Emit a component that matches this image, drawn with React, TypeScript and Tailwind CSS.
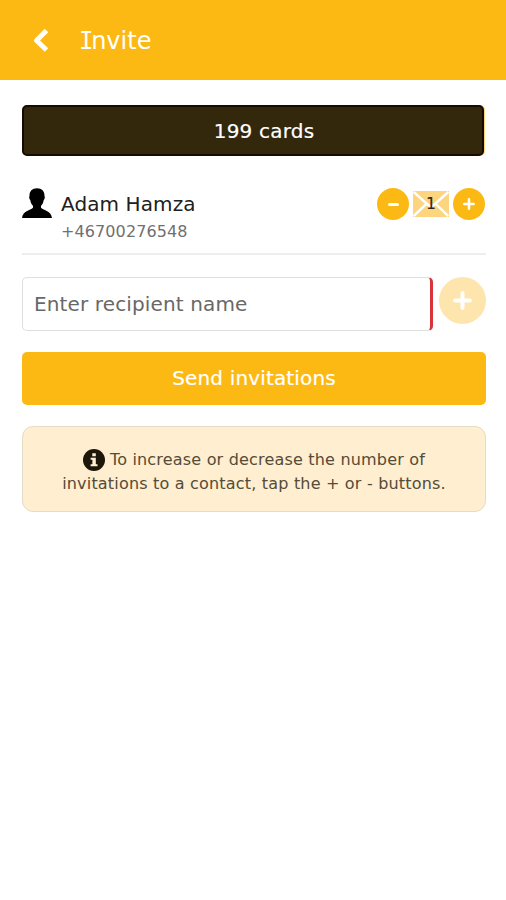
import React from "react";

function Plus({ className }: { className: string }) {
  return (
    <svg viewBox="0 0 20 20" className={className} fill="none" stroke="white" strokeWidth="4.2" strokeLinecap="round">
      <path d="M10 2.2v15.6M2.2 10h15.6" />
    </svg>
  );
}

function Envelope() {
  return (
    <div className="relative ml-1 h-[26px] w-9 bg-[#fdd57f]">
      <svg viewBox="0 0 36 27" className="h-full w-full" fill="none" stroke="white" strokeWidth="2.5">
        <path d="M0 1 15 14.5q3 2.2 6 0L36 1M0 26 13.5 13M36 26 22.5 13" />
      </svg>
      <span className="absolute inset-0 text-center text-[15px] leading-[27px] text-[#302610] [-webkit-text-stroke:0.2px_#302610]">1</span>
    </div>
  );
}

export default function App() {
  return (
    <div className="min-h-[900px] w-[506px] bg-white font-['DejaVu_Sans',sans-serif]">
      <header className="flex h-20 items-center bg-[#fdb913] pl-[32px] text-white">
        <svg viewBox="0 0 17 26" className="h-[26px] w-[17px]" fill="none" stroke="white" strokeWidth="5" strokeLinejoin="round">
          <path d="M14.500 3.500 4.500 13.500l10 9.500" />
        </svg>
        <h1 className="ml-[30px] pt-0.5 text-[24px] leading-8">
          <span className="-mr-px font-['DejaVu_Sans_Mono',monospace] tracking-[-1.3px]">I</span>nvite
        </h1>
      </header>

      <main className="pt-[25px] pr-5 pl-[22px]">
        <div className="mr-px h-[51px] rounded-[5px] border-r border-[#fbd477] bg-[#fbd477]">
          <div className="h-full rounded-[5px] border-2 border-[#160b02] bg-[#33270c] pl-[22px] text-center text-[20px] leading-[48px] tracking-[0.2px] text-white [-webkit-text-stroke:0.2px_white]">
            199 cards
          </div>
        </div>

        <section className="mt-[31px] flex h-[68px] border-b-2 border-[#eeeeee]">
          <svg viewBox="0 0 30 30" className="mt-px h-[30px] w-[30px]" fill="black">
            <path d="M15 0.300C10.200 0.300 7.300 3.200 7.500 8c-.7 1.100-.2 3.200.8 4 .4 2.800 1.300 4.400 2.700 5.800v2C9.500 22.200 0.800 22.600 0 30h30c-.8-7.400-9.500-7.800-11-10.200v-2c1.400-1.400 2.300-3 2.700-5.800 1-.8 1.500-2.900.8-4C22.700 3.200 19.800 0.300 15 0.300Z" />
          </svg>
          <div className="ml-[9px] flex-1">
            <div className="mt-[3px] text-[20px] leading-7 tracking-[0.1px] text-[#202020]">Adam Hamza</div>
            <div className="pt-px text-[16px] leading-[26px] tracking-[0.1px] text-[#707070]">+46700276548</div>
          </div>
          <div className="mt-px mr-px flex h-8 items-center">
            <button className="flex size-8 items-center justify-center rounded-full bg-[#fdb913]">
              <span className="h-[3px] w-[11px] rounded-full bg-white" />
            </button>
            <Envelope />
            <button className="ml-1 flex size-8 items-center justify-center rounded-full bg-[#fdb913]">
              <Plus className="size-3" />
            </button>
          </div>
        </section>

        <div className="mt-[22px] flex h-[54px] justify-between">
          <div className="h-[54px] w-[411px] rounded-[5px] border border-r-[3px] border-[#dedede] border-r-[#d9343b] pl-[11px] text-[20px] leading-[52px] tracking-[0.13px] text-[#686868]">
            Enter recipient name
          </div>
          <button className="flex size-[47px] items-center justify-center rounded-full bg-[#fee4ad]">
            <Plus className="size-[19px]" />
          </button>
        </div>

        <button className="mt-[21px] block h-[53px] w-[464px] rounded-[5px] bg-[#fdb913] text-center text-[20px] leading-[53px] tracking-[0.15px] text-white [-webkit-text-stroke:0.2px_white]">
          Send invitations
        </button>

        <div className="mt-[21px] h-[86px] w-[464px] rounded-[11px] border border-[#e5dcc6] bg-[#ffeecf] pt-[21px] text-center text-[16px] leading-6 tracking-[0.19px] text-[#544b39]">
          <div className="flex items-center justify-center">
            <svg viewBox="0 0 22 22" className="mr-[5px] size-[22px]">
              <circle cx="11" cy="11" r="11" fill="#1d1709" />
              <path d="M9.300 4.200h3.500v3H9.300zM7.600 8.800h5.200v6.500h1.700v2H7.600v-2h1.800v-4.500H7.600z" fill="#fff2d2" />
            </svg>
            <span>To increase or decrease the number of</span>
          </div>
          <div>invitations to a contact, tap the + or - buttons.</div>
        </div>
      </main>
    </div>
  );
}
